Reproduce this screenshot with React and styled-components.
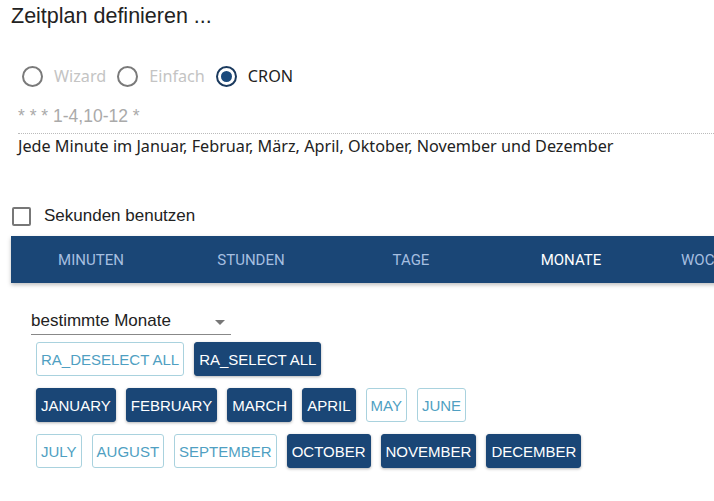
import React, { useState } from 'react'
import styled, { createGlobalStyle } from 'styled-components'

const GlobalStyle = createGlobalStyle`
  body {
    margin: 0;
    background: #fff;
    font-family: Roboto, "Liberation Sans", Arial, sans-serif;
    color: #222;
  }
`;

const Page = styled.div`
  width: 714px;
  height: 501px;
  overflow: hidden;
  padding: 4px 0 0 11px;
  box-sizing: border-box;
`;

const Title = styled.h2`
  margin: 0;
  font-family: "Liberation Sans", Arial, sans-serif;
  font-weight: 400;
  font-size: 21.5px;
  line-height: 24px;
  color: #222;
`;

const RadioRow = styled.div`
  display: flex;
  align-items: center;
  margin: 36px 0 0 11px;
  height: 24px;
  font-family: "Noto Sans", "Open Sans", sans-serif;
  font-size: 16.2px;
`;

const RadioLabel = styled.label`
  display: flex;
  align-items: center;
  gap: 11px;
  margin-right: 11px;
  color: ${p => (p.$checked ? '#222' : '#c4c4c4')};
`;

const RadioCircle = styled.span`
  width: 21px;
  height: 21px;
  box-sizing: border-box;
  border-radius: 50%;
  border: 2px solid ${p => (p.$checked ? '#1b3a5e' : '#7a7a7a')};
  display: flex;
  align-items: center;
  justify-content: center;
  &::after {
    content: '';
    display: ${p => (p.$checked ? 'block' : 'none')};
    width: 11px;
    height: 11px;
    border-radius: 50%;
    background: #1b4a7c;
  }
`;

const CronInput = styled.div`
  margin: 18px 0 0 7px;
  padding-bottom: 7px;
  border-bottom: 1px dotted #bbb;
  font-size: 17.5px;
  line-height: 20px;
  color: #aaa;
  font-family: "Liberation Sans", Arial, sans-serif;
`;

const Description = styled.div`
  margin: 1px 0 0 7px;
  font-family: "Noto Sans", "Open Sans", sans-serif;
  font-size: 16.2px;
  line-height: 22px;
  color: #222;
`;

const CheckRow = styled.label`
  display: flex;
  align-items: center;
  gap: 13px;
  margin: 48px 0 0 1px;
  height: 22px;
  font-family: "Liberation Sans", Arial, sans-serif;
  font-size: 17px;
  color: #222;
`;

const CheckBox = styled.span`
  width: 19px;
  height: 19px;
  box-sizing: border-box;
  border: 2px solid #777;
  border-radius: 2px;
`;

const TabBar = styled.div`
  display: flex;
  margin-top: 9px;
  height: 47px;
  background: #1a4676;
  box-shadow: 0 2px 4px rgba(0, 0, 0, 0.25);
  width: 760px;
`;

const Tab = styled.div`
  flex: 0 0 160px;
  display: flex;
  align-items: center;
  justify-content: center;
  font-size: 15px;
  text-transform: uppercase;
  color: ${p => (p.$active ? '#fff' : '#a6bfe0')};
`;

const Panel = styled.div`
  padding: 24px 0 0 20px;
`;

const Select = styled.div`
  display: flex;
  align-items: center;
  justify-content: space-between;
  width: 200px;
  height: 28px;
  box-sizing: border-box;
  border-bottom: 1px solid #888;
  font-family: "Liberation Sans", Arial, sans-serif;
  font-size: 17px;
  color: #222;
  padding-right: 6px;
`;

const Caret = styled.span`
  width: 0;
  height: 0;
  border-left: 5px solid transparent;
  border-right: 5px solid transparent;
  border-top: 5px solid #777;
  margin-top: 3px;
`;

const ButtonRows = styled.div`
  display: flex;
  flex-direction: column;
  gap: 12px;
  margin: 7px 0 0 5px;
`;

const ButtonRow = styled.div`
  display: flex;
  gap: 10px;
`;

const MonthButton = styled.button`
  height: 34px;
  padding: 0 4px;
  border-radius: 3px;
  font-family: "Liberation Sans", Arial, sans-serif;
  font-size: 15px;
  text-transform: uppercase;
  cursor: pointer;
  border: 1px solid ${p => (p.$selected ? '#1a4676' : '#a9d2de')};
  background: ${p => (p.$selected ? '#1a4676' : '#fff')};
  color: ${p => (p.$selected ? '#fff' : '#4f9fc2')};
  box-shadow: ${p => (p.$selected ? '0 1px 3px rgba(0,0,0,0.3)' : 'none')};
`;

const months = [
  ['January', 'February', 'March', 'April', 'May', 'June'],
  ['July', 'August', 'September', 'October', 'November', 'December'],
];

const tabs = ['Minuten', 'Stunden', 'Tage', 'Monate', 'Wochentage'];

export default function App() {
  const [selected, setSelected] = useState(['January', 'February', 'March', 'April', 'October', 'November', 'December'])
  const [mode] = useState('cron')

  const toggle = m => {
    setSelected(selected.includes(m) ? selected.filter(x => x !== m) : [...selected, m])
  }

  return (
    <Page>
      <GlobalStyle />
      <Title>Zeitplan definieren ...</Title>
      <RadioRow>
        <RadioLabel $checked={mode === 'wizard'}>
          <RadioCircle $checked={mode === 'wizard'} />Wizard
        </RadioLabel>
        <RadioLabel $checked={mode === 'simple'}>
          <RadioCircle $checked={mode === 'simple'} />Einfach
        </RadioLabel>
        <RadioLabel $checked={mode === 'cron'}>
          <RadioCircle $checked={mode === 'cron'} />CRON
        </RadioLabel>
      </RadioRow>
      <CronInput>* * * 1-4,10-12 *</CronInput>
      <Description>Jede Minute im Januar, Februar, März, April, Oktober, November und Dezember</Description>
      <CheckRow>
        <CheckBox />
        Sekunden benutzen
      </CheckRow>
      <TabBar>
        {tabs.map(t => (
          <Tab key={t} $active={t === 'Monate'}>{t}</Tab>
        ))}
      </TabBar>
      <Panel>
        <Select>
          bestimmte Monate
          <Caret />
        </Select>
        <ButtonRows>
          <ButtonRow>
            <MonthButton onClick={() => setSelected([])}>ra_deselect all</MonthButton>
            <MonthButton $selected onClick={() => setSelected(months.flat())}>ra_select all</MonthButton>
          </ButtonRow>
          {months.map((row, i) => (
            <ButtonRow key={i}>
              {row.map(m => (
                <MonthButton key={m} $selected={selected.includes(m)} onClick={() => toggle(m)}>
                  {m}
                </MonthButton>
              ))}
            </ButtonRow>
          ))}
        </ButtonRows>
      </Panel>
    </Page>
  )
}
